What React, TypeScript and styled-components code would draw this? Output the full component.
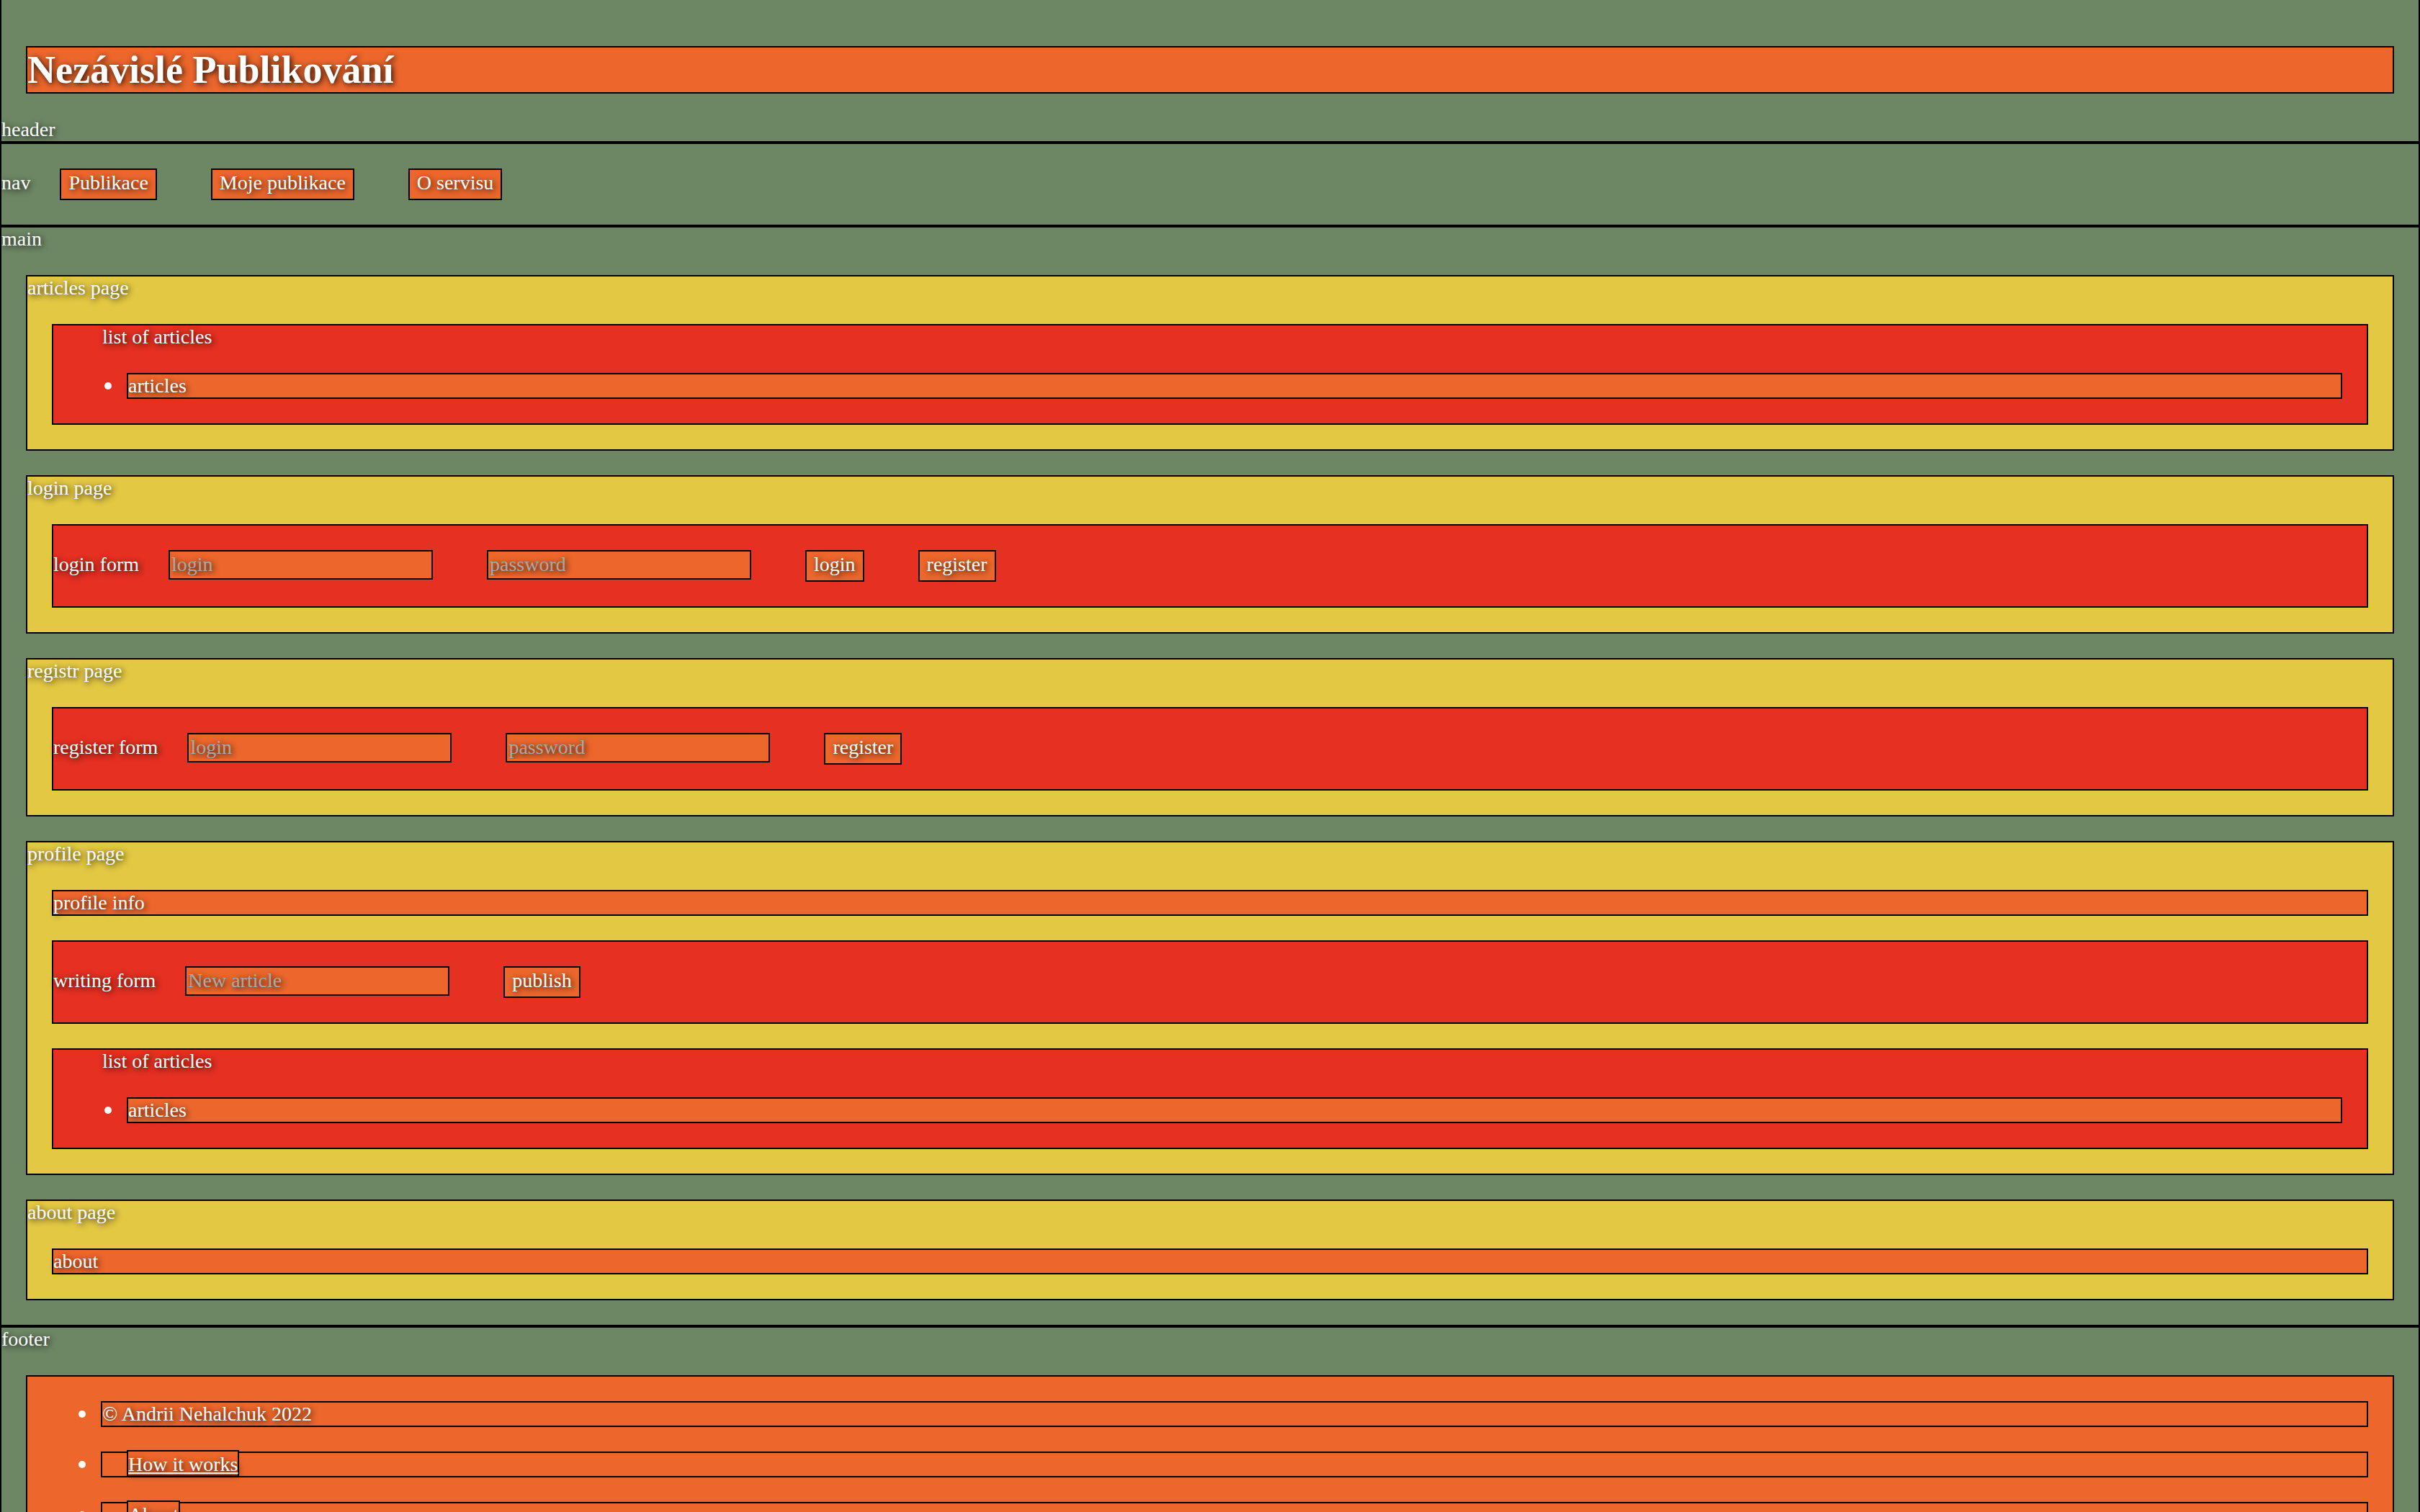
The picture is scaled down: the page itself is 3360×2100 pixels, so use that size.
import React from "react";
import styled, { createGlobalStyle, css } from "styled-components";

const space = "34px";
const color = {
  page: "#6d8765",
  section: "#e3c843",
  group: "#e53022",
  item: "#ed672c",
  muted: "#a9a9a9",
};

const GlobalStyle = createGlobalStyle`
  *, *::before, *::after { box-sizing: border-box; }
  body {
    margin: 0;
    background: ${color.page};
    color: #fff;
    font-family: "Liberation Serif", "Times New Roman", serif;
    font-size: 28px;
    line-height: 32px;
    text-shadow: 2px 2px 8px rgba(0, 0, 0, 0.9);
  }
`;

const outlined = css`
  border: 2px solid #000;
`;

const spaced = css`
  ${outlined}
  margin: ${space};
`;

const Header = styled.header`
  ${outlined}
  border-top: 0;
  padding-top: 64px;
`;

const Title = styled.h1`
  ${outlined}
  margin: 0 ${space} ${space};
  background: ${color.item};
  font-size: 54px;
  line-height: 62px;
`;

const Nav = styled.nav`
  ${outlined}
`;

const Main = styled.main`
  ${outlined}
`;

const Footer = styled.footer`
  ${outlined}
`;

const Section = styled.section`
  ${spaced}
  background: ${color.section};
`;

const Form = styled.form`
  ${spaced}
  background: ${color.group};
`;

const Info = styled.div`
  ${spaced}
  background: ${color.item};
`;

const List = styled.ul<{ $tone: "group" | "item" }>`
  ${spaced}
  padding: 0 0 0 68px;
  background: ${(p) => color[p.$tone]};
  list-style: none;
`;

const Item = styled.li`
  ${spaced}
  position: relative;
  background: ${color.item};

  /* bullet hanging in the list's left padding */
  &::before {
    content: "";
    position: absolute;
    top: 11px;
    left: -33px;
    width: 10px;
    height: 10px;
    border-radius: 50%;
    background: #fff;
  }
`;

const FooterLink = styled.a`
  ${spaced}
  padding-top: 2px;
  background: ${color.item};
  color: inherit;
`;

const Button = styled.button`
  ${spaced}
  padding: 2px 10px 6px;
  border-radius: 0;
  background: ${color.item};
  color: inherit;
  font: inherit;
  text-shadow: inherit;
`;

const Field = styled.input`
  ${spaced}
  width: 367px;
  height: 41px;
  padding: 2px 2px 3px;
  border-radius: 0;
  background: ${color.item};
  color: inherit;
  font: inherit;
  text-shadow: inherit;

  &::placeholder {
    color: ${color.muted};
    opacity: 1;
  }
`;

function ArticleList() {
  return (
    <List $tone="group">
      list of articles
      <Item>articles</Item>
    </List>
  );
}

export default function App() {
  return (
    <>
      <GlobalStyle />
      <Header>
        <Title>Nezávislé Publikování</Title>
        header
      </Header>
      <Nav>
        nav <Button type="button">Publikace</Button>{" "}
        <Button type="button">Moje publikace</Button>{" "}
        <Button type="button">O servisu</Button>
      </Nav>
      <Main>
        main
        <Section>
          articles page
          <ArticleList />
        </Section>
        <Section>
          login page
          <Form onSubmit={(e) => e.preventDefault()}>
            login form <Field type="text" placeholder="login" aria-label="login" />{" "}
            <Field type="password" placeholder="password" aria-label="password" />{" "}
            <Button type="submit">login</Button>{" "}
            <Button type="button">register</Button>
          </Form>
        </Section>
        <Section>
          registr page
          <Form onSubmit={(e) => e.preventDefault()}>
            register form <Field type="text" placeholder="login" aria-label="login" />{" "}
            <Field type="password" placeholder="password" aria-label="password" />{" "}
            <Button type="submit">register</Button>
          </Form>
        </Section>
        <Section>
          profile page
          <Info>profile info</Info>
          <Form onSubmit={(e) => e.preventDefault()}>
            writing form <Field type="text" placeholder="New article" aria-label="New article" />{" "}
            <Button type="submit">publish</Button>
          </Form>
          <ArticleList />
        </Section>
        <Section>
          about page
          <Info>about</Info>
        </Section>
      </Main>
      <Footer>
        footer
        <List $tone="item">
          <Item>© Andrii Nehalchuk 2022</Item>
          <Item>
            <FooterLink href="#how">How it works</FooterLink>
          </Item>
          <Item>
            <FooterLink href="#about">About</FooterLink>
          </Item>
        </List>
      </Footer>
    </>
  );
}
